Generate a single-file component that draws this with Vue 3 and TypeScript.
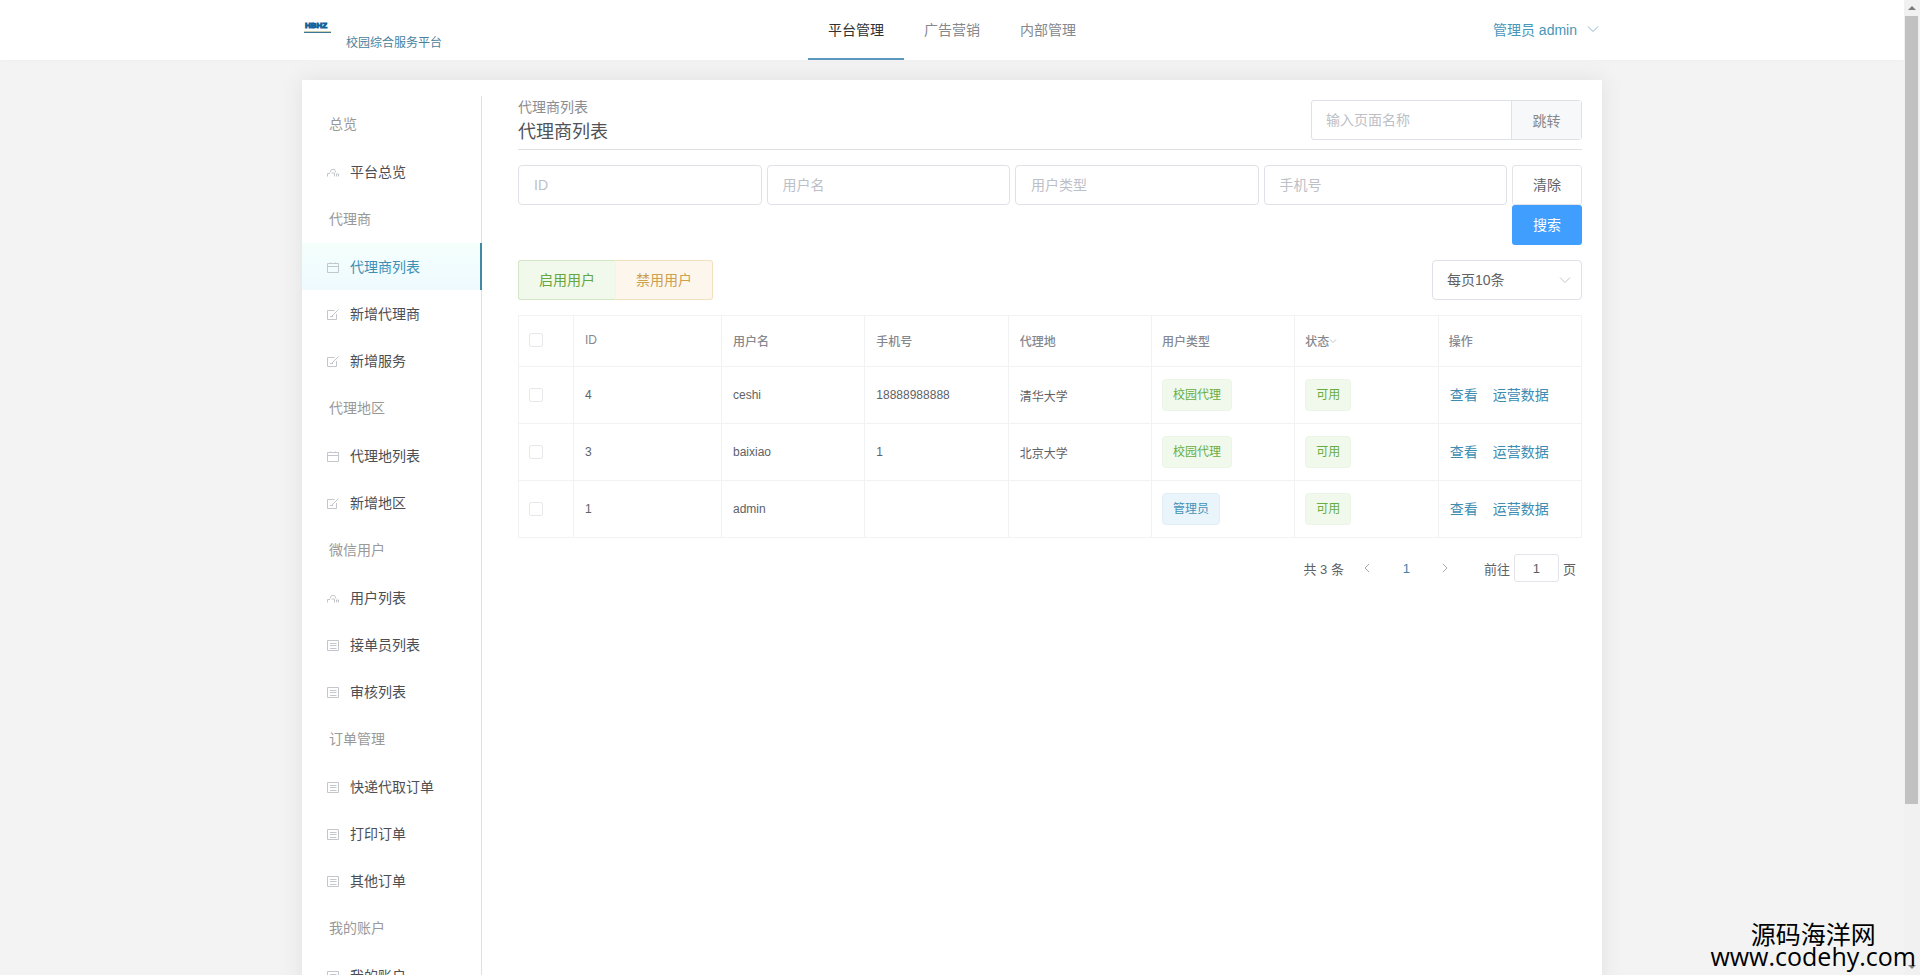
<script setup lang="ts">
import { ref } from 'vue'

type IconName = 'chart' | 'calendar' | 'edit' | 'list'

interface MenuItem {
  label: string
  icon: IconName
  active?: boolean
}

interface MenuGroup {
  title: string
  items: MenuItem[]
}

interface UserRow {
  id: number
  name: string
  phone: string
  place: string
  type: string
  tone: 'success' | 'info'
}

const tabs = ['平台管理', '广告营销', '内部管理']

const groups: MenuGroup[] = [
  { title: '总览', items: [{ label: '平台总览', icon: 'chart' }] },
  {
    title: '代理商',
    items: [
      { label: '代理商列表', icon: 'calendar', active: true },
      { label: '新增代理商', icon: 'edit' },
      { label: '新增服务', icon: 'edit' },
    ],
  },
  {
    title: '代理地区',
    items: [
      { label: '代理地列表', icon: 'calendar' },
      { label: '新增地区', icon: 'edit' },
    ],
  },
  {
    title: '微信用户',
    items: [
      { label: '用户列表', icon: 'chart' },
      { label: '接单员列表', icon: 'list' },
      { label: '审核列表', icon: 'list' },
    ],
  },
  {
    title: '订单管理',
    items: [
      { label: '快递代取订单', icon: 'list' },
      { label: '打印订单', icon: 'list' },
      { label: '其他订单', icon: 'list' },
    ],
  },
  { title: '我的账户', items: [{ label: '我的账户', icon: 'list' }] },
]

const filters = ['ID', '用户名', '用户类型', '手机号']
const columns = ['ID', '用户名', '手机号', '代理地', '用户类型', '状态', '操作']

const rows: UserRow[] = [
  { id: 4, name: 'ceshi', phone: '18888988888', place: '清华大学', type: '校园代理', tone: 'success' },
  { id: 3, name: 'baixiao', phone: '1', place: '北京大学', type: '校园代理', tone: 'success' },
  { id: 1, name: 'admin', phone: '', place: '', type: '管理员', tone: 'info' },
]

const iconPaths: Record<IconName, string> = {
  chart: 'M.5 10.5V7.5H3M3 6.5L4.5 3.5H7.5L9 6.5M4.5 7H7.5V10.5M9.5 10.5V8H11.5V10.5',
  calendar: 'M.5 2.5H11.5V11.5H.5ZM.5 5.5H11.5M3.5 1.5V3M8.5 1.5V3',
  edit: 'M7.5 2.5H.5V11.5H9.5V6M5 8L11.5 1.5M3 8.5H6',
  list: 'M.5 1.5H11.5V11.5H.5ZM3 4.5H9.5M3 6.5H9.5M3 9.5H9.5',
}

const pageSize = ref('10')
const jumpPage = ref('1')
</script>

<template>
  <div class="shell">
    <div class="page">
      <header class="topbar">
        <div class="topbar-inner">
          <a class="brand" href="#">
            <svg class="logo" width="28" height="16" viewBox="0 0 28 16" aria-hidden="true">
              <text x="1" y="8" font-size="8">HBHZ</text>
              <rect x="0" y="11" width="27" height="1" fill="#c9cfae" />
              <rect x="0" y="12" width="27" height="1" fill="#3f7896" />
            </svg>
            <span>校园综合服务平台</span>
          </a>
          <nav class="tabs">
            <a v-for="(tab, i) in tabs" :key="tab" href="#" :class="{ active: i === 0 }">{{ tab }}</a>
          </nav>
          <button class="account" type="button">
            管理员 admin
            <svg width="12" height="8" viewBox="0 0 12 8" aria-hidden="true"><path d="M1 1.5L6 6.5L11 1.5" /></svg>
          </button>
        </div>
      </header>

      <div class="card">
        <nav class="sidebar">
          <section v-for="group in groups" :key="group.title">
            <h2>{{ group.title }}</h2>
            <a v-for="item in group.items" :key="item.label" href="#" :class="{ active: item.active }">
              <svg width="12" height="12" viewBox="0 0 12 12" aria-hidden="true"><path :d="iconPaths[item.icon]" /></svg>
              <span>{{ item.label }}</span>
            </a>
          </section>
        </nav>

        <main class="main">
          <div class="heading">
            <div>
              <p>代理商列表</p>
              <h1>代理商列表</h1>
            </div>
            <form class="jump" @submit.prevent>
              <input type="text" placeholder="输入页面名称" aria-label="输入页面名称" />
              <button type="submit">跳转</button>
            </form>
          </div>

          <form class="filters" @submit.prevent>
            <input v-for="f in filters" :key="f" class="field" type="text" :placeholder="f" :aria-label="f" />
            <div class="filter-actions">
              <button class="clear" type="reset">清除</button>
              <button class="search" type="submit">搜索</button>
            </div>
          </form>

          <div class="tools">
            <div class="toggle">
              <button class="enable" type="button">启用用户</button>
              <button class="disable" type="button">禁用用户</button>
            </div>
            <div class="select">
              <select v-model="pageSize" aria-label="每页条数">
                <option value="10">每页10条</option>
                <option value="20">每页20条</option>
              </select>
              <svg width="12" height="8" viewBox="0 0 12 8" aria-hidden="true"><path d="M1 1.5L6 6.5L11 1.5" /></svg>
            </div>
          </div>

          <table class="grid">
            <colgroup>
              <col class="col-check" />
              <col class="col-id" />
              <col v-for="n in 6" :key="n" />
            </colgroup>
            <thead>
              <tr>
                <th><input type="checkbox" aria-label="全选" /></th>
                <th v-for="c in columns" :key="c" scope="col">
                  {{ c }}<svg v-if="c === '状态'" width="8" height="8" viewBox="0 0 8 8" aria-hidden="true"><path d="M1 1.5L4 4.5L7 1.5" /></svg>
                </th>
              </tr>
            </thead>
            <tbody>
              <tr v-for="row in rows" :key="row.id">
                <td><input type="checkbox" :aria-label="row.name" /></td>
                <td>{{ row.id }}</td>
                <td>{{ row.name }}</td>
                <td>{{ row.phone }}</td>
                <td>{{ row.place }}</td>
                <td><span class="tag" :class="row.tone">{{ row.type }}</span></td>
                <td><span class="tag success">可用</span></td>
                <td>
                  <div class="links"><a href="#">查看</a><a href="#">运营数据</a></div>
                </td>
              </tr>
            </tbody>
          </table>

          <div class="pager">
            <span class="total">共 3 条</span>
            <button type="button" aria-label="上一页">
              <svg width="8" height="12" viewBox="0 0 8 12" aria-hidden="true"><path d="M6 2L2 6L6 10" /></svg>
            </button>
            <button class="current" type="button">1</button>
            <button type="button" aria-label="下一页">
              <svg width="8" height="12" viewBox="0 0 8 12" aria-hidden="true"><path d="M2 2L6 6L2 10" /></svg>
            </button>
            <label class="goto">前往<input v-model="jumpPage" type="text" />页</label>
          </div>
        </main>
      </div>
    </div>

    <div class="scrollbar" aria-hidden="true">
      <svg width="16" height="16" viewBox="0 0 16 16"><path d="M4 10L8 6L12 10Z" /></svg>
      <div class="track"><div class="thumb"></div></div>
      <svg width="16" height="16" viewBox="0 0 16 16"><path d="M4 6L8 10L12 6Z" /></svg>
    </div>

    <div class="watermark">
      <span>源码海洋网</span>
      <span>www.codehy.com</span>
    </div>
  </div>
</template>

<style>
body {
  margin: 0;
  overflow: hidden;
}
</style>

<style scoped>
.shell {
  display: flex;
  height: 100vh;
  overflow: hidden;
  position: relative;
  background: #f3f3f3;
  color: #606266;
  font-family: "Liberation Sans", "Noto Sans CJK SC", sans-serif;
  font-size: 14px;
}

.shell * {
  box-sizing: border-box;
}

a {
  color: inherit;
  text-decoration: none;
}

button,
input,
select {
  font: inherit;
  color: inherit;
  margin: 0;
  padding: 0;
  border: 0;
  background: none;
}

svg path {
  fill: none;
  stroke: currentColor;
}

.page {
  flex: 1;
  min-width: 0;
}

.topbar {
  background: #fff;
  box-shadow: 0 1px 2px #f0f0f0;
}

.topbar-inner {
  display: grid;
  grid-template-columns: 1fr auto 1fr;
  height: 60px;
  max-width: 1300px;
  margin: 0 auto;
}

.brand {
  display: flex;
  align-items: flex-start;
  gap: 14px;
  padding: 20px 0 0 2px;
  color: #4a7f9c;
  font-size: 12px;
  line-height: 16px;
}

.brand span {
  padding-top: 15px;
}

.logo text {
  fill: #12629c;
  stroke: #12629c;
  stroke-width: 1;
  font-family: "Liberation Sans", sans-serif;
  font-weight: 700;
}

.tabs {
  display: flex;
}

.tabs a {
  padding: 0 20px;
  line-height: 60px;
  color: #85888c;
}

.tabs a.active {
  color: #303133;
  box-shadow: inset 0 -2px #5b97bf;
}

.account {
  display: flex;
  align-items: center;
  justify-self: end;
  gap: 10px;
  padding: 0 3px 2px 0;
  color: #4796b8;
}

.account svg {
  color: #8fb6c8;
}

.card {
  display: flex;
  max-width: 1300px;
  margin: 20px auto 0;
  padding: 16px 0;
  background: #fff;
  box-shadow: 0 0 20px #e0e0e0;
}

.sidebar {
  width: 180px;
  padding-top: 4px;
  border-right: 1px solid #dfe0e2;
}

.sidebar h2 {
  margin: 0;
  padding-left: 27px;
  font-size: 14px;
  font-weight: 400;
  line-height: 48px;
  color: #999;
}

.sidebar a {
  display: flex;
  align-items: center;
  gap: 11px;
  height: 47px;
  margin-right: -1px;
  padding: 0 0 2px 25px;
  color: #4c4e53;
}

.sidebar svg {
  margin-top: 2px;
  color: #c3c6ca;
}

.sidebar a.active {
  color: #3f8fb5;
  background: linear-gradient(#f4fffc, #effaff);
  box-shadow: inset -2px 0 #4289a4;
}

.main {
  flex: 1;
  min-width: 0;
  padding: 0 20px 0 36px;
}

.heading {
  display: flex;
  justify-content: space-between;
  height: 54px;
  padding-top: 4px;
  border-bottom: 1px solid #dfe0e2;
}

.heading p {
  margin: 0;
  line-height: 14px;
  color: #8b8d91;
}

.heading h1 {
  margin: 5px 0 0;
  font-size: 18px;
  font-weight: 400;
  line-height: 26px;
  color: #505256;
}

.jump {
  display: flex;
  width: 271px;
  height: 40px;
  border: 1px solid #dfe1e6;
  border-radius: 3px;
}

.jump input {
  flex: 1;
  min-width: 0;
  padding: 0 14px;
}

.jump button {
  width: 70px;
  border-left: 1px solid #dfe1e6;
  background: #f7f8fa;
  color: #85888f;
}

input::placeholder {
  color: #bcc0c7;
  opacity: 1;
}

.filters {
  display: flex;
  align-items: flex-start;
  gap: 5px;
  margin-top: 15px;
}

.field {
  flex: 1;
  min-width: 0;
  height: 40px;
  padding: 0 15px;
  border: 1px solid #dfe1e6;
  border-radius: 4px;
}

.filter-actions {
  display: flex;
  flex-direction: column;
  width: 70px;
}

.filter-actions button {
  height: 40px;
  padding-bottom: 2px;
  border-radius: 3px;
}

.clear {
  border: 1px solid #e2e4e9;
}

.search {
  background: #409eff;
  color: #fff;
}

.tools {
  display: flex;
  justify-content: space-between;
  margin-top: 15px;
}

.toggle {
  display: flex;
}

.toggle button {
  height: 40px;
  padding: 0 20px 2px;
}

.enable {
  border: 1px solid #d3e6c6;
  border-right-color: #f2f5e5;
  border-radius: 3px 0 0 3px;
  background: #f0f9eb;
  color: #67a53f;
}

.disable {
  border: 1px solid #f3e0bd;
  border-left: 0;
  border-radius: 0 3px 3px 0;
  background: #fdf6ec;
  color: #cda04c;
}

.select {
  display: flex;
  align-items: center;
  position: relative;
  width: 150px;
  height: 40px;
  border: 1px solid #dfe1e6;
  border-radius: 4px;
}

.select select {
  width: 100%;
  height: 100%;
  padding: 0 14px;
  appearance: none;
}

.select svg {
  position: absolute;
  right: 10px;
  color: #c0c4cc;
  pointer-events: none;
}

.grid {
  width: 100%;
  margin-top: 15px;
  table-layout: fixed;
  border-collapse: separate;
  border-spacing: 0;
  border: 1px solid #f0f2f4;
  border-bottom: 0;
  border-right: 0;
  font-size: 12px;
}

.col-check {
  width: 55px;
}

.col-id {
  width: 148px;
}

.grid th,
.grid td {
  height: 57px;
  padding: 0 11px;
  border-right: 1px solid #f0f2f4;
  border-bottom: 1px solid #f0f2f4;
  text-align: left;
}

.grid th {
  height: 51px;
  padding-bottom: 2px;
  font-weight: 500;
  color: #85888e;
}

.grid th:first-child,
.grid td:first-child,
.grid th:nth-child(n + 6),
.grid td:nth-child(n + 6) {
  padding-left: 10px;
}

.grid th svg {
  color: #c0c4cc;
}

.grid input {
  display: block;
  width: 14px;
  height: 14px;
  border: 1px solid #e6e8ec;
  border-radius: 2px;
  background: #fff;
  appearance: none;
}

.tag {
  display: inline-block;
  padding: 0 10px;
  border: 1px solid #ebf6e5;
  border-radius: 4px;
  line-height: 30px;
}

.tag.success {
  background: #f0f9eb;
  color: #67ad42;
}

.tag.info {
  border-color: #e0eff7;
  background: #eaf5fb;
  color: #4592b8;
}

.links {
  display: flex;
  gap: 15px;
  padding: 0 0 2px 1px;
  font-size: 14px;
  color: #3d8db3;
}

.pager {
  display: flex;
  align-items: center;
  justify-content: flex-end;
  margin-top: 16px;
  padding-right: 6px;
  font-size: 13px;
}

.pager button {
  display: flex;
  align-items: center;
  justify-content: center;
  width: 39px;
  height: 28px;
}

.pager button svg {
  color: #a8abb2;
}

.total {
  padding-right: 4px;
}

.pager .current {
  color: #4384a8;
}

.goto {
  display: flex;
  align-items: center;
  gap: 4px;
  margin-left: 19px;
}

.goto input {
  width: 45px;
  height: 28px;
  border: 1px solid #e2e4e9;
  border-radius: 3px;
  text-align: center;
}

.scrollbar {
  display: flex;
  flex-direction: column;
  width: 16px;
  background: #f1f1f1;
}

.scrollbar path {
  fill: #7c7c7c;
  stroke: none;
}

.track {
  flex: 1;
  padding: 0 2px 0 1px;
}

.thumb {
  height: 100%;
  max-height: 788px;
  background: #c1c1c1;
}

.watermark {
  position: absolute;
  right: 4px;
  bottom: 8px;
  display: flex;
  flex-direction: column;
  align-items: center;
  color: #000;
  font-family: "Open Sans", "Noto Sans CJK SC", sans-serif;
  font-size: 25px;
  line-height: 22px;
}
</style>
